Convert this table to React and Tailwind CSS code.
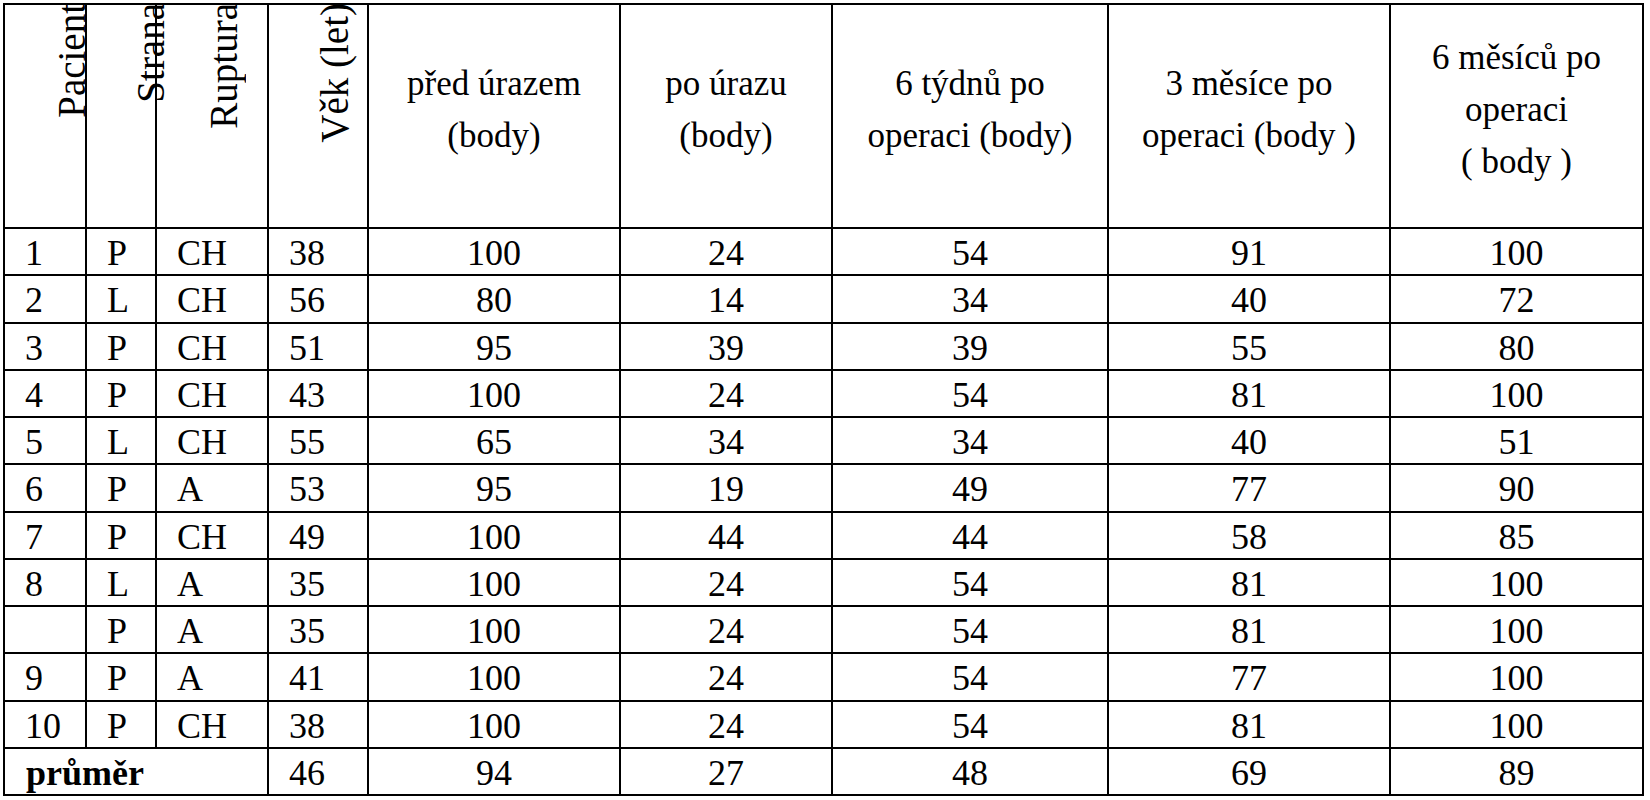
import React from 'react';

const rows = [
  ['1', 'P', 'CH', '38', '100', '24', '54', '91', '100'],
  ['2', 'L', 'CH', '56', '80', '14', '34', '40', '72'],
  ['3', 'P', 'CH', '51', '95', '39', '39', '55', '80'],
  ['4', 'P', 'CH', '43', '100', '24', '54', '81', '100'],
  ['5', 'L', 'CH', '55', '65', '34', '34', '40', '51'],
  ['6', 'P', 'A', '53', '95', '19', '49', '77', '90'],
  ['7', 'P', 'CH', '49', '100', '44', '44', '58', '85'],
  ['8', 'L', 'A', '35', '100', '24', '54', '81', '100'],
  ['', 'P', 'A', '35', '100', '24', '54', '81', '100'],
  ['9', 'P', 'A', '41', '100', '24', '54', '77', '100'],
  ['10', 'P', 'CH', '38', '100', '24', '54', '81', '100'],
];

const average = ['46', '94', '27', '48', '69', '89'];

const cell = 'border-r-2 border-b-2 border-black';

function Rotated({ children, shift }) {
  return (
    <div className={`${cell} flex justify-end items-start overflow-visible`}>
      <span className={`[writing-mode:vertical-rl] rotate-180 text-[39px] leading-none whitespace-nowrap -mt-[2px] ${shift}`}>
        {children}
      </span>
    </div>
  );
}

function Head({ children }) {
  return (
    <div className={`${cell} flex items-center justify-center text-center text-[35px] leading-[52px] pb-[12px]`}>
      <div>{children}</div>
    </div>
  );
}

export default function App() {
  return (
    <div className="min-h-screen bg-white text-black" style={{ fontFamily: '"Liberation Serif", "Times New Roman", serif' }}>
      <div className="ml-[3px] pt-[3px] w-fit">
        <div className="grid grid-cols-[82px_70px_112px_100px_252px_212px_276px_282px_253px] grid-rows-[224px_repeat(12,47.25px)] border-l-2 border-t-2 border-black">
          <Rotated shift="-mr-[6px]">Pacient</Rotated>
          <Rotated shift="-mr-[15px]">Strana</Rotated>
          <Rotated shift="mr-[24px]">Ruptura</Rotated>
          <Rotated shift="mr-[13px]">Věk (let)</Rotated>
          <Head>před úrazem<br />(body)</Head>
          <Head>po úrazu<br />(body)</Head>
          <Head>6 týdnů po<br />operaci (body)</Head>
          <Head>3 měsíce po<br />operaci (body )</Head>
          <Head>6 měsíců po<br />operaci<br />( body )</Head>

          {rows.map((r, i) =>
            r.map((v, j) => (
              <div
                key={`${i}-${j}`}
                className={`${cell} flex items-center text-[36px] leading-none pt-[3px] ${j < 4 ? 'pl-[20px]' : 'justify-center'}`}
              >
                {v}
              </div>
            ))
          )}

          <div className={`${cell} col-span-3 flex items-center text-[36px] leading-none pt-[3px] pl-[21px] font-bold`}>
            průměr
          </div>
          {average.map((v, j) => (
            <div
              key={j}
              className={`${cell} flex items-center text-[36px] leading-none pt-[3px] ${j === 0 ? 'pl-[20px]' : 'justify-center'}`}
            >
              {v}
            </div>
          ))}
        </div>
      </div>
    </div>
  );
}
